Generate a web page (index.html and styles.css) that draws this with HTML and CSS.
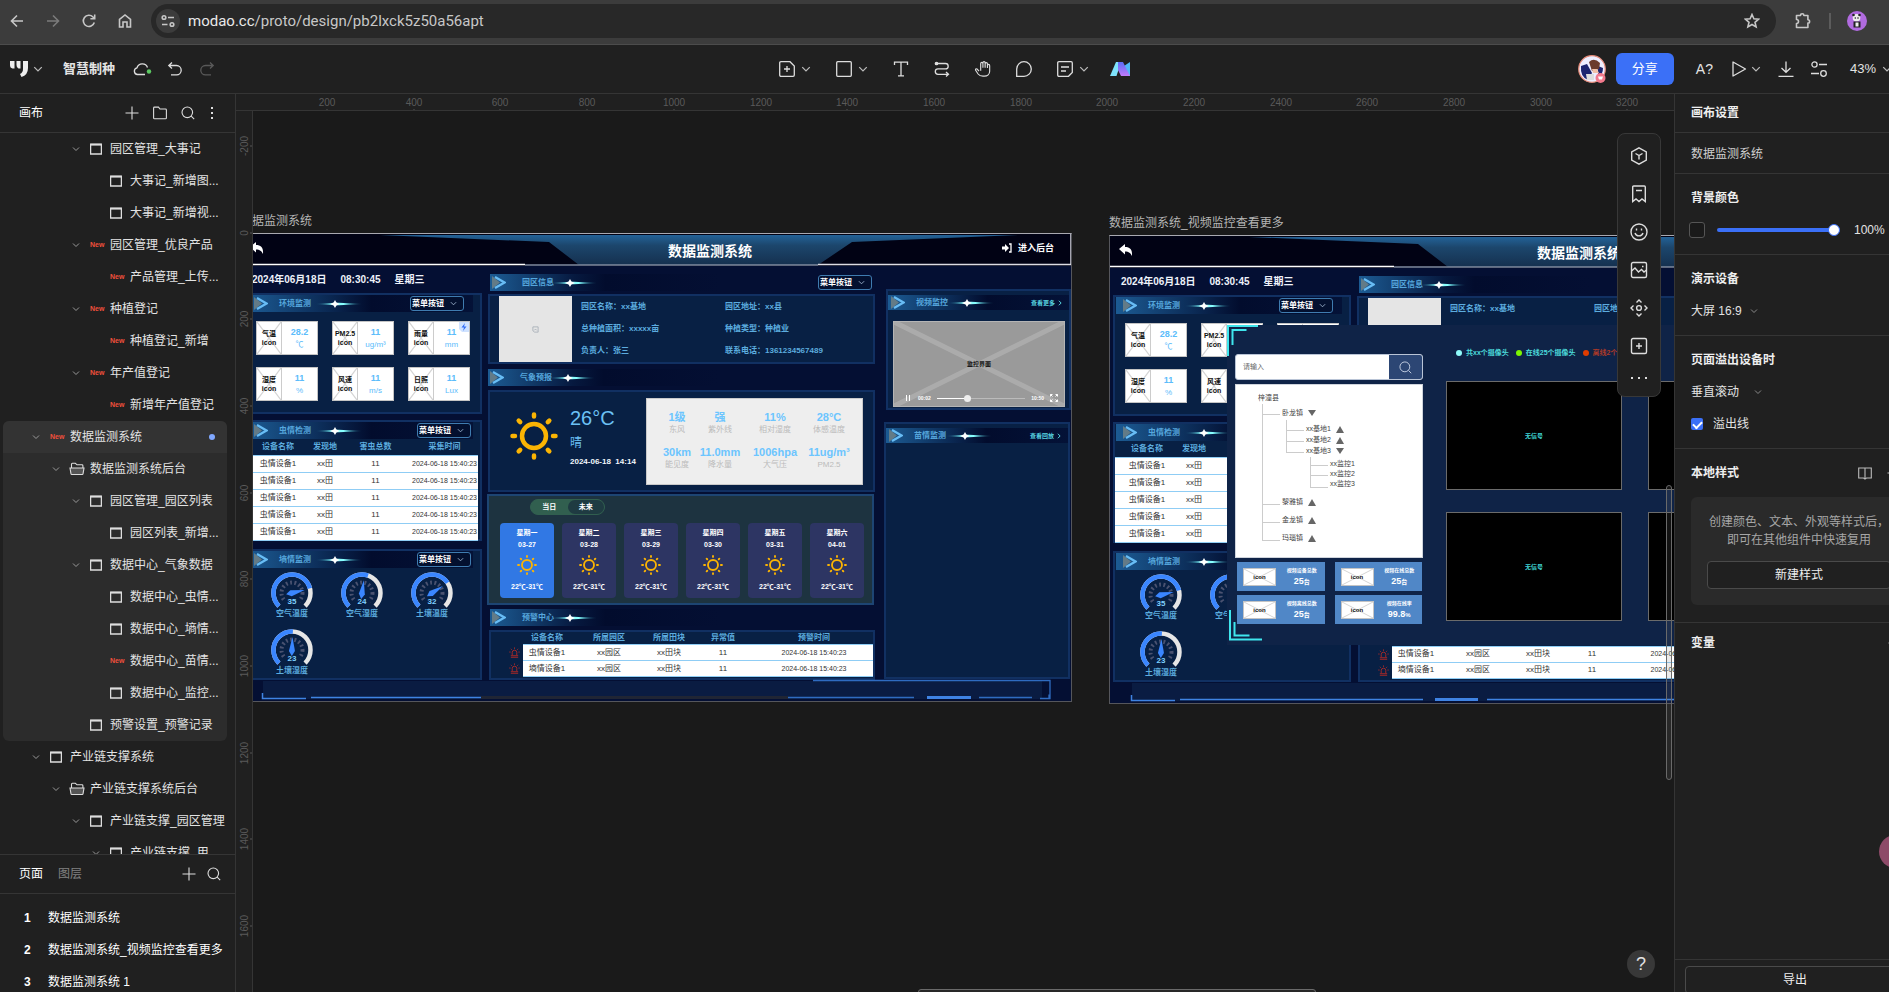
FILE: index.html
```html
<!DOCTYPE html>
<html lang="zh-CN">
<head>
<meta charset="utf-8">
<title>智慧制种</title>
<link rel="stylesheet" href="styles.css">
</head>
<body>
<svg class="sprite" aria-hidden="true">
  <defs>
    <linearGradient id="g-title" x1="0" y1="0" x2="0" y2="1"><stop offset="0" stop-color="#236297"/><stop offset=".35" stop-color="#1c466c"/><stop offset="1" stop-color="#15304f"/></linearGradient>
    <linearGradient id="g-spark" x1="0" y1="0" x2="1" y2="0"><stop offset="0" stop-color="#3fc4d8" stop-opacity=".1"/><stop offset=".4" stop-color="#8ff"/><stop offset=".6" stop-color="#8ff"/><stop offset="1" stop-color="#3fc4d8" stop-opacity=".1"/></linearGradient>
    <linearGradient id="g-ai" x1="0" y1="0" x2="0" y2="1"><stop offset="0" stop-color="#5b6cf5"/><stop offset="1" stop-color="#c07bfa"/></linearGradient>
    <symbol id="i-chev" viewBox="0 0 8 8"><path d="M1 2.5 4 5.5 7 2.5"/></symbol>
    <symbol id="i-right" viewBox="0 0 8 8"><path d="M2.500 1 5.500 4 2.500 7"/></symbol>
    <symbol id="i-frame" viewBox="0 0 12 12"><path d="M.6 1.200h10.800v9.800H.6z" /><path d="M.6 1.700h10.800" stroke-width="1.800"/></symbol>
    <symbol id="i-open" viewBox="0 0 16 14"><path d="M2.500 6V2.200c0-.6.3-.9.9-.9h3l1.600 1.500h5c.6 0 .9.300.9.900V6"/><path d="M1 6h14l-1 5.800c-.1.500-.4.700-.8.700H2.800c-.4 0-.7-.2-.8-.7z" fill="#555"/></symbol>
    <symbol id="i-plus" viewBox="0 0 14 14"><path d="M7 .5v13M.5 7h13"/></symbol>
    <symbol id="i-search" viewBox="0 0 14 14"><circle cx="6.300" cy="6.300" r="5.300"/><path d="m10.200 10.200 3 3"/></symbol>
    <symbol id="i-arrowhead" viewBox="0 0 14 13"><path d="M0 0v13l8-6.500z" fill="#637b87"/><path d="M3 1l9.500 5.500L3 12" fill="none" stroke="#68bdf5" stroke-width="2.200"/></symbol>
    <symbol id="i-spark" viewBox="0 0 46 8"><path d="M0 4 19 2.800h4l23 1.200-23 1.200h-4z" fill="url(#g-spark)"/><path d="M19 0l1.400 2.600L24 4l-3.600 1.400L19 8l-1.400-2.600L14 4l3.600-1.400z" fill="#fff"/></symbol>
    <symbol id="i-sun" viewBox="0 0 48 48"><circle cx="24" cy="24" r="12" fill="none" stroke="#fbb403" stroke-width="4.500"/><path d="M24 2.500v2M24 43.500v2M2.500 24h2.500M43 24h2.500M8.700 8.700l1.500 1.500M37.800 37.800l1.500 1.500M39.300 8.700l-1.500 1.500M10.200 37.800l-1.500 1.500" fill="none" stroke="#fbb403" stroke-width="4.500" stroke-linecap="round"/></symbol>
    <symbol id="i-cross" viewBox="0 0 25 32" preserveAspectRatio="none"><path d="M0 0 25 32M25 0 0 32" stroke="#d5d5d5" fill="none"/></symbol>
    <symbol id="i-back" viewBox="0 0 14 12"><path d="M6 0v3c5 0 7.500 2.500 7 9-1.500-3-3-4.500-7-4.500v3L0 5z" fill="#fff"/></symbol>
    <symbol id="i-alarm" viewBox="0 0 12 12"><path d="M3.500 9V6a2.500 2.500 0 0 1 5 0v3M2 9.500h8M2 11.200h8M6 .5v1.500M2 2l1 1M10 2 9 3M.3 5.500h1.400M10.300 5.500h1.400" fill="none" stroke="#b02a26" stroke-width="1"/></symbol>
    <symbol id="i-dial" viewBox="0 0 42 36"><circle cx="21" cy="21" r="10.500" fill="none" stroke="#4a5270" stroke-width="4" stroke-dasharray="1.800 2.500"/><path d="M13 27h16v8H13z" fill="#082044"/><path d="M7.900 34.100A18.500 18.500 0 1 1 34.100 34.100" fill="none" stroke="#e6e6e6" stroke-width="4.500"/></symbol>
    <symbol id="i-title" viewBox="0 0 832 33"><path d="M0 0h832v33H0z" fill="#010214"/><path d="M140 2h638L612 9l-34 23H339L309 9z" fill="url(#g-title)"/><path d="M0 31.500h285" stroke="#fff" stroke-width="1.500"/><path d="M285 32h293" stroke="#7f8ba0"/><path d="M578 31.500h253V0" fill="none" stroke="#dcdce4" stroke-width="1.500"/></symbol>
    <symbol id="i-foot" viewBox="0 0 832 22"><path d="M23 2h779v18H23z" fill="#0a1c42"/><path d="M22.500 14v5.500H66M71 18.500h170" fill="none" stroke="#3f83e3" stroke-width="1.500"/></symbol>
  </defs>
</svg>

<header class="browser">
  <nav class="nav" aria-label="浏览器导航">
    <button aria-label="后退"><svg viewBox="0 0 16 16"><path d="M14 8H3M8 2.500 2.500 8 8 13.500"/></svg></button>
    <button class="dim" aria-label="前进"><svg viewBox="0 0 16 16"><path d="M2 8h11M8 2.500 13.500 8 8 13.500"/></svg></button>
    <button aria-label="刷新"><svg viewBox="0 0 16 16"><path d="M13.300 9.500A5.600 5.600 0 1 1 12 4l1.500 1.500M13.700 1.500v4.300H9.400"/></svg></button>
    <button aria-label="主页"><svg viewBox="0 0 16 16"><path d="M2.500 14V6.500L8 2l5.500 4.500V14H10V9H6v5z"/></svg></button>
  </nav>
  <div class="address">
    <span class="site"><svg viewBox="0 0 16 16"><circle cx="4" cy="4.500" r="1.800"/><path d="M8 4.500h6M2 11.500h5.500"/><circle cx="12" cy="11.500" r="1.800"/></svg></span>
    <span class="url"><b>modao.cc</b>/proto/design/pb2lxck5z50a56apt</span>
    <button class="star" aria-label="收藏"><svg viewBox="0 0 16 16"><path d="m8 1.500 1.900 4.300 4.700.4-3.600 3.100 1.100 4.600L8 11.500l-4.100 2.400L5 9.300 1.400 6.200l4.700-.4z"/></svg></button>
  </div>
  <button class="ext" aria-label="扩展程序"><svg viewBox="0 0 18 18"><path d="M2.500 3.500h4a1.700 1.700 0 0 1 3.400 0h4v4.200a1.700 1.700 0 0 1 0 3.400v4.400H2.500v-4a2 2 0 0 0 0-4z" stroke-linejoin="round"/></svg></button>
  <i class="bar"></i>
  <button class="me" aria-label="账号"><svg viewBox="0 0 20 20"><circle cx="10" cy="10" r="10" fill="#b16be0"/><circle cx="9.500" cy="6.800" r="3.800" fill="#eee"/><circle cx="6.500" cy="4" r="1.300" fill="#222"/><circle cx="12.500" cy="4" r="1.300" fill="#222"/><path d="M6.500 10.500h7v6h-7z" fill="#222"/><path d="M8.500 11.500h3v4h-3z" fill="#eee"/><circle cx="8.300" cy="7" r=".8" fill="#222"/><circle cx="11" cy="7" r=".8" fill="#222"/></svg></button>
</header>

<div class="app">
  <header class="toolbar">
    <div class="tools left">
      <button class="brand" aria-label="墨刀"><svg viewBox="0 0 18 18"><path d="M0 1h4.500v7.500H2.500Q0 8 0 5zM6.500 1h4v7.500h-2Q6.500 8 6.500 5zM13 1h5v7q0 7-6.500 9l-1.500-3q3-1.500 3-5z" fill="#eee"/></svg></button>
      <svg class="ic chev"><use href="#i-chev"/></svg>
      <h1>智慧制种</h1>
      <button class="cloud" aria-label="已同步"><svg viewBox="0 0 20 16"><path d="M12 13.500H4.500a3.400 3.400 0 0 1-.5-6.700A5.500 5.500 0 0 1 14.500 6.500"/><circle cx="16" cy="10.500" r="2.200" fill="#5cc862" stroke="none"/></svg></button>
      <button aria-label="撤销"><svg viewBox="0 0 16 16"><path d="M5 1.500 1.800 4.500 5 7.500M2 4.500h7.500a4.700 4.700 0 0 1 0 9.400H4"/></svg></button>
      <button class="off" aria-label="重做"><svg viewBox="0 0 16 16"><path d="M11 1.500l3.200 3-3.200 3M14 4.500H6.500a4.700 4.700 0 0 0 0 9.400H12"/></svg></button>
    </div>
    <div class="tools mid">
      <button aria-label="添加页面"><svg viewBox="0 0 16 16"><path d="M2 .7h9L15.300 5v9c0 .8-.5 1.300-1.300 1.300H2c-.8 0-1.300-.5-1.300-1.300V2C.7 1.200 1.200.7 2 .7zM8 5v6M5 8h6"/></svg></button>
      <svg class="ic chev"><use href="#i-chev"/></svg>
      <button class="wide" aria-label="形状"><svg viewBox="0 0 16 16"><rect x=".7" y=".7" width="14.600" height="14.600" rx="1"/></svg></button>
      <svg class="ic chev"><use href="#i-chev"/></svg>
      <button class="wide" aria-label="文本"><svg viewBox="0 0 16 16"><path d="M1.500 4V1.200h13V4M8 1.200v13.600M5 14.800h6"/></svg></button>
      <button class="wide" aria-label="连线"><svg viewBox="0 0 16 16"><circle cx="2.500" cy="2.500" r="1.200" fill="#ddd"/><path d="M3 2.500h8.500a2.700 2.700 0 0 1 0 5.400H4a2.700 2.700 0 0 0 0 5.400h10M12 11l2.500 2.300L12 15.500"/></svg></button>
      <button class="wide" aria-label="拖动"><svg viewBox="0 0 18 18"><path d="M4.500 11.500 2.700 9.300C1.500 8-.2 9.300.9 10.700l2.600 3.900C4.700 16.300 6.500 17 9 17h1.500c3.500 0 6-2.300 6-5.500V5.300c0-1.900-2.500-1.900-2.500 0V8V3.200c0-1.900-2.600-1.900-2.600 0V7.500 2c0-1.800-2.500-1.800-2.500 0v5.500V3c0-1.900-2.500-1.900-2.500 0v8"/></svg></button>
      <button class="wide" aria-label="评论"><svg viewBox="0 0 16 16"><path d="M.7 15.300V8A7.300 7.300 0 1 1 8 15.300z"/></svg></button>
      <button class="wide" aria-label="便签"><svg viewBox="0 0 16 16"><path d="M2 .7h12c.8 0 1.300.5 1.300 1.300v9.500l-3.800 3.800H2c-.8 0-1.300-.5-1.300-1.300V2C.7 1.200 1.200.7 2 .7zM4 6h8M4 10h5"/></svg></button>
      <svg class="ic chev"><use href="#i-chev"/></svg>
      <button class="ai" aria-label="AI"><svg viewBox="0 0 22 16"><path d="M6 1h5l-4.500 14H0z" fill="#7fe3fb"/><path d="M14 5l6-4v14h-6z" fill="#4fb8f5"/><path d="M8 1h5l7 14h-9L8 9z" fill="url(#g-ai)"/></svg></button>
    </div>
    <div class="tools right">
      <button class="face" aria-label="用户"><svg viewBox="0 0 28 28"><circle cx="14" cy="14" r="13.300" fill="#eef" stroke="#e58a78" stroke-width="1.200"/><path d="M3 11l6-2 5 9-4 7q-8-3-7-14zM20 11l5 2q0 7-5 9z" fill="#1d2570"/><path d="M11 7q5-5 11 1l-1 6-7 2z" fill="#6b3b2c"/><path d="M14 14h5l2 4h-6z" fill="#f2c1a8"/><path d="M8 19h8v6H9z" fill="#ddd"/><circle cx="22.500" cy="23" r="5" fill="#f2798c"/><path d="M20 21.500h5l-1 3h-3z" fill="#fff"/></svg></button>
      <button class="share">分享</button>
      <button class="txt">A?</button>
      <button class="play" aria-label="运行"><svg viewBox="0 0 16 16"><path d="M2 1v14L14.500 8z" stroke-linejoin="round"/></svg></button>
      <svg class="ic chev"><use href="#i-chev"/></svg>
      <button class="dl" aria-label="下载"><svg viewBox="0 0 16 16"><path d="M8 .5V11M3.500 7 8 11.300 12.500 7M.5 15.300h15"/></svg></button>
      <button class="set" aria-label="设置"><svg viewBox="0 0 16 16"><circle cx="3.500" cy="3.500" r="2.600"/><path d="M8 3.500h8M0 12.500h8"/><circle cx="12.500" cy="12.500" r="2.800"/></svg></button>
      <button class="pct">43%</button>
      <svg class="ic chev"><use href="#i-chev"/></svg>
    </div>
  </header>

  <main class="work">
    <aside class="side">
      <div class="side-head">
        <h2>画布</h2>
        <button aria-label="添加"><svg><use href="#i-plus"/></svg></button>
        <button aria-label="文件夹"><svg viewBox="0 0 14 14"><path d="M.6 2c0-.6.300-.9.900-.9h4L7 3h5.500c.6 0 .9.300.9.900v8c0 .6-.3.900-.9.900h-11c-.6 0-.9-.3-.9-.9z"/></svg></button>
        <button aria-label="搜索"><svg><use href="#i-search"/></svg></button>
        <button class="more" aria-label="更多"><svg viewBox="0 0 14 14"><path d="M7 1v2M7 6v2M7 11v2" stroke-width="2"/></svg></button>
      </div>
      <ul class="tree">
        <li class="l3"><svg class="tw"><use href="#i-chev"/></svg><svg class="fr"><use href="#i-frame"/></svg><span>园区管理_大事记</span></li>
        <li class="l4"><svg class="fr"><use href="#i-frame"/></svg><span>大事记_新增图...</span></li>
        <li class="l4"><svg class="fr"><use href="#i-frame"/></svg><span>大事记_新增视...</span></li>
        <li class="l3"><svg class="tw"><use href="#i-chev"/></svg><em>New</em><span>园区管理_优良产品</span></li>
        <li class="l4"><em>New</em><span>产品管理_上传...</span></li>
        <li class="l3"><svg class="tw"><use href="#i-chev"/></svg><em>New</em><span>种植登记</span></li>
        <li class="l4"><em>New</em><span>种植登记_新增</span></li>
        <li class="l3"><svg class="tw"><use href="#i-chev"/></svg><em>New</em><span>年产值登记</span></li>
        <li class="l4"><em>New</em><span>新增年产值登记</span></li>
        <li class="group">
          <ul>
            <li class="l1 sel"><svg class="tw"><use href="#i-chev"/></svg><em>New</em><span>数据监测系统</span><i class="dot"></i></li>
            <li class="l2"><svg class="tw"><use href="#i-chev"/></svg><svg class="fo"><use href="#i-open"/></svg><span>数据监测系统后台</span></li>
            <li class="l3"><svg class="tw"><use href="#i-chev"/></svg><svg class="fr"><use href="#i-frame"/></svg><span>园区管理_园区列表</span></li>
            <li class="l4"><svg class="fr"><use href="#i-frame"/></svg><span>园区列表_新增...</span></li>
            <li class="l3"><svg class="tw"><use href="#i-chev"/></svg><svg class="fr"><use href="#i-frame"/></svg><span>数据中心_气象数据</span></li>
            <li class="l4"><svg class="fr"><use href="#i-frame"/></svg><span>数据中心_虫情...</span></li>
            <li class="l4"><svg class="fr"><use href="#i-frame"/></svg><span>数据中心_墒情...</span></li>
            <li class="l4"><em>New</em><span>数据中心_苗情...</span></li>
            <li class="l4"><svg class="fr"><use href="#i-frame"/></svg><span>数据中心_监控...</span></li>
            <li class="l3"><svg class="tw none"></svg><svg class="fr"><use href="#i-frame"/></svg><span>预警设置_预警记录</span></li>
          </ul>
        </li>
        <li class="l1"><svg class="tw"><use href="#i-chev"/></svg><svg class="fr"><use href="#i-frame"/></svg><span>产业链支撑系统</span></li>
        <li class="l2"><svg class="tw"><use href="#i-chev"/></svg><svg class="fo"><use href="#i-open"/></svg><span>产业链支撑系统后台</span></li>
        <li class="l3"><svg class="tw"><use href="#i-chev"/></svg><svg class="fr"><use href="#i-frame"/></svg><span>产业链支撑_园区管理</span></li>
        <li class="l4"><svg class="tw deep"><use href="#i-chev"/></svg><svg class="fr"><use href="#i-frame"/></svg><span>产业链支撑_用</span></li>
      </ul>
      <section class="pages">
        <div class="side-head">
          <button class="tab on">页面</button><button class="tab">图层</button>
          <button class="push" aria-label="添加页面"><svg><use href="#i-plus"/></svg></button>
          <button aria-label="搜索页面"><svg><use href="#i-search"/></svg></button>
        </div>
        <ol>
          <li><b>1</b>数据监测系统</li>
          <li><b>2</b>数据监测系统_视频监控查看更多</li>
          <li><b>3</b>数据监测系统 1</li>
        </ol>
      </section>
    </aside>

    <section class="stage">
      <svg class="ruler-x">
        <g><text x="91" y="12">200</text><text x="178" y="12">400</text><text x="264" y="12">600</text><text x="351" y="12">800</text><text x="438" y="12">1000</text><text x="525" y="12">1200</text><text x="611" y="12">1400</text><text x="698" y="12">1600</text><text x="785" y="12">1800</text><text x="871" y="12">2000</text><text x="958" y="12">2200</text><text x="1045" y="12">2400</text><text x="1131" y="12">2600</text><text x="1218" y="12">2800</text><text x="1305" y="12">3000</text><text x="1391" y="12">3200</text></g>
        <path d="M91 15v2M178 15v2M264 15v2M351 15v2M438 15v2M525 15v2M611 15v2M698 15v2M785 15v2M871 15v2M958 15v2M1045 15v2M1131 15v2M1218 15v2M1305 15v2M1391 15v2"/>
      </svg>
      <svg class="ruler-y">
        <g><text transform="translate(12 35) rotate(-90)">-200</text><text transform="translate(12 122) rotate(-90)">0</text><text transform="translate(12 208) rotate(-90)">200</text><text transform="translate(12 295) rotate(-90)">400</text><text transform="translate(12 382) rotate(-90)">600</text><text transform="translate(12 468) rotate(-90)">800</text><text transform="translate(12 555) rotate(-90)">1000</text><text transform="translate(12 642) rotate(-90)">1200</text><text transform="translate(12 728) rotate(-90)">1400</text><text transform="translate(12 815) rotate(-90)">1600</text></g>
        <path d="M14 35h2M14 122h2M14 208h2M14 295h2M14 382h2M14 468h2M14 555h2M14 642h2M14 728h2M14 815h2"/>
      </svg>

      <div class="canvas">
        <h3 class="name name-a">数据监测系统</h3>
        <article class="board board-a">
          <svg class="title-bg"><use href="#i-title"/></svg>
          <svg class="back"><use href="#i-back"/></svg>
          <h2 class="title">数据监测系统</h2>
          <a class="enter" href="#"><svg viewBox="0 0 10 10"><path d="M0 3.500h3V1l4 4-4 4V6.500H0z" fill="#fff"/><path d="M7 1h2v8H7" fill="none" stroke="#fff" stroke-width="1.300"/></svg>进入后台</a>
          <p class="clock"><span>2024年06月18日</span><span>08:30:45</span><span>星期三</span></p>

          <section class="panel p-env">
            <div class="head"><svg class="ah"><use href="#i-arrowhead"/></svg><h4>环境监测</h4><svg class="sp"><use href="#i-spark"/></svg><span class="dd"><select aria-label="环境监测菜单"><option>菜单按钮</option></select><svg><use href="#i-chev"/></svg></span></div>
            <div class="cards">
              <div class="card"><div class="ico"><svg><use href="#i-cross"/></svg><span>气温</span><span>icon</span></div><p><b>28.2</b><i>℃</i></p></div>
              <div class="card"><div class="ico"><svg><use href="#i-cross"/></svg><span>PM2.5</span><span>icon</span></div><p><b>11</b><i>ug/m³</i></p></div>
              <div class="card"><div class="ico"><svg><use href="#i-cross"/></svg><span>雨量</span><span>icon</span></div><p><b>11</b><i>mm</i></p><svg class="bolt" viewBox="0 0 10 10"><path d="M0 0h10v10H3L0 7z" fill="#cfe2ff"/><path d="M6 1 2.500 5.500H5L4 9l3.500-4.500H5z" fill="#2f6bf5"/></svg></div>
              <div class="card"><div class="ico"><svg><use href="#i-cross"/></svg><span>湿度</span><span>icon</span></div><p><b>11</b><i>%</i></p></div>
              <div class="card"><div class="ico"><svg><use href="#i-cross"/></svg><span>风速</span><span>icon</span></div><p><b>11</b><i>m/s</i></p></div>
              <div class="card"><div class="ico"><svg><use href="#i-cross"/></svg><span>日照</span><span>icon</span></div><p><b>11</b><i>Lux</i></p></div>
            </div>
          </section>

          <section class="panel p-bug">
            <div class="head"><svg class="ah"><use href="#i-arrowhead"/></svg><h4>虫情检测</h4><svg class="sp"><use href="#i-spark"/></svg><span class="dd"><select aria-label="虫情检测菜单"><option>菜单按钮</option></select><svg><use href="#i-chev"/></svg></span></div>
            <table class="bugs">
              <thead><tr><th>设备名称</th><th>发现地</th><th>害虫总数</th><th>采集时间</th></tr></thead>
              <tbody>
                <tr><td>虫情设备1</td><td>xx田</td><td>11</td><td>2024-06-18 15:40:23</td></tr>
                <tr><td>虫情设备1</td><td>xx田</td><td>11</td><td>2024-06-18 15:40:23</td></tr>
                <tr><td>虫情设备1</td><td>xx田</td><td>11</td><td>2024-06-18 15:40:23</td></tr>
                <tr><td>虫情设备1</td><td>xx田</td><td>11</td><td>2024-06-18 15:40:23</td></tr>
                <tr><td>虫情设备1</td><td>xx田</td><td>11</td><td>2024-06-18 15:40:23</td></tr>
              </tbody>
            </table>
          </section>

          <section class="panel p-soil">
            <div class="head"><svg class="ah"><use href="#i-arrowhead"/></svg><h4>墒情监测</h4><svg class="sp"><use href="#i-spark"/></svg><span class="dd"><select aria-label="墒情监测菜单"><option>菜单按钮</option></select><svg><use href="#i-chev"/></svg></span></div>
            <div class="gauges">
              <figure><svg viewBox="0 0 42 36"><use href="#i-dial"/><path class="arc" pathLength="100" stroke-dasharray="78 100" d="M7.900 34.100A18.500 18.500 0 1 1 34.100 34.100"/><path class="needle" transform="rotate(77 21 21)" d="M21 8l3 14-3 5-3-5z"/><text x="21" y="32">35</text></svg><figcaption>空气温度</figcaption></figure>
              <figure><svg viewBox="0 0 42 36"><use href="#i-dial"/><path class="arc" pathLength="100" stroke-dasharray="57 100" d="M7.900 34.100A18.500 18.500 0 1 1 34.100 34.100"/><path class="needle" transform="rotate(8 21 21)" d="M21 8l3 14-3 5-3-5z"/><text x="21" y="32">24</text></svg><figcaption>空气湿度</figcaption></figure>
              <figure><svg viewBox="0 0 42 36"><use href="#i-dial"/><path class="arc" pathLength="100" stroke-dasharray="71 100" d="M7.900 34.100A18.500 18.500 0 1 1 34.100 34.100"/><path class="needle" transform="rotate(57 21 21)" d="M21 8l3 14-3 5-3-5z"/><text x="21" y="32">32</text></svg><figcaption>土壤温度</figcaption></figure>
              <figure><svg viewBox="0 0 42 36"><use href="#i-dial"/><path class="arc" pathLength="100" stroke-dasharray="51 100" d="M7.900 34.100A18.500 18.500 0 1 1 34.100 34.100"/><path class="needle" transform="rotate(2 21 21)" d="M21 8l3 14-3 5-3-5z"/><text x="21" y="32">23</text></svg><figcaption>土壤湿度</figcaption></figure>
            </div>
          </section>

          <div class="head h-park"><svg class="ah"><use href="#i-arrowhead"/></svg><h4>园区信息</h4><svg class="sp"><use href="#i-spark"/></svg><span class="dd"><select aria-label="园区信息菜单"><option>菜单按钮</option></select><svg><use href="#i-chev"/></svg></span></div>
          <section class="panel p-park">
            <div class="photo"><svg viewBox="0 0 8 8"><path d="M1 1h6v6H3L1 5.500zM2.500 5l1.500-1.500L5.500 5" fill="none" stroke="#9aa4ad" stroke-width=".8"/></svg></div>
            <ul class="facts"><li>园区名称：xx基地</li><li>园区地址：xx县</li><li>总种植面积：xxxxx亩</li><li>种植类型：种植业</li><li>负责人：张三</li><li>联系电话：1361234567489</li></ul>
          </section>

          <div class="head h-weather"><svg class="ah"><use href="#i-arrowhead"/></svg><h4>气象预报</h4><svg class="sp"><use href="#i-spark"/></svg></div>
          <section class="panel p-weather">
            <svg class="sun"><use href="#i-sun"/></svg>
            <div class="now"><strong>26°C</strong><span>晴</span><time>2024-06-18&nbsp; 14:14</time></div>
            <dl class="stats">
              <div><dt>1级</dt><dd>东风</dd></div><div><dt>强</dt><dd>紫外线</dd></div><div><dt>11%</dt><dd>相对湿度</dd></div><div><dt>28°C</dt><dd>体感温度</dd></div>
              <div><dt>30km</dt><dd>能见度</dd></div><div><dt>11.0mm</dt><dd>降水量</dd></div><div><dt>1006hpa</dt><dd>大气压</dd></div><div><dt>11ug/m³</dt><dd>PM2.5</dd></div>
            </dl>
          </section>

          <section class="panel p-forecast">
            <div class="switch"><button>当日</button><button class="on">未来</button></div>
            <ul class="days">
              <li class="on"><span>星期一</span><span>03-27</span><svg><use href="#i-sun"/></svg><span>22℃-31℃</span></li>
              <li><span>星期二</span><span>03-28</span><svg><use href="#i-sun"/></svg><span>22℃-31℃</span></li>
              <li><span>星期三</span><span>03-29</span><svg><use href="#i-sun"/></svg><span>22℃-31℃</span></li>
              <li><span>星期四</span><span>03-30</span><svg><use href="#i-sun"/></svg><span>22℃-31℃</span></li>
              <li><span>星期五</span><span>03-31</span><svg><use href="#i-sun"/></svg><span>22℃-31℃</span></li>
              <li><span>星期六</span><span>04-01</span><svg><use href="#i-sun"/></svg><span>22℃-31℃</span></li>
            </ul>
          </section>

          <div class="head h-warn"><svg class="ah"><use href="#i-arrowhead"/></svg><h4>预警中心</h4><svg class="sp"><use href="#i-spark"/></svg></div>
          <section class="panel p-warn">
            <table class="warns">
              <thead><tr><td></td><th>设备名称</th><th>所属园区</th><th>所属田块</th><th>异常值</th><th>预警时间</th></tr></thead>
              <tbody>
                <tr><td class="al"><svg><use href="#i-alarm"/></svg></td><td>虫情设备1</td><td>xx园区</td><td>xx田块</td><td>11</td><td>2024-06-18 15:40:23</td></tr>
                <tr><td class="al"><svg><use href="#i-alarm"/></svg></td><td>墒情设备1</td><td>xx园区</td><td>xx田块</td><td>11</td><td>2024-06-18 15:40:23</td></tr>
              </tbody>
            </table>
          </section>

          <section class="panel p-video">
            <div class="head"><svg class="ah"><use href="#i-arrowhead"/></svg><h4>视频监控</h4><svg class="sp"><use href="#i-spark"/></svg><a href="#">查看更多<svg><use href="#i-right"/></svg></a></div>
            <div class="player">
              <svg class="x"><use href="#i-cross"/></svg>
              <span class="cap">监控界面</span>
              <div class="ctl"><svg viewBox="0 0 8 8"><path d="M2.500 1v6M5.500 1v6"/></svg><span>00:02</span><input type="range" value="33" aria-label="播放进度"><span>10:50</span><svg viewBox="0 0 8 8"><path d="M.5 2.500v-2h2M7.500 2.500v-2h-2M.5 5.500v2h2M7.500 5.500v2h-2M.5.5l2 2M7.500.5l-2 2M.5 7.500l2-2M7.500 7.500l-2-2"/></svg></div>
            </div>
          </section>
          <section class="panel p-seed">
            <div class="head"><svg class="ah"><use href="#i-arrowhead"/></svg><h4>苗情监测</h4><svg class="sp"><use href="#i-spark"/></svg><a href="#">查看回放<svg><use href="#i-right"/></svg></a></div>
          </section>
          <svg class="foot" viewBox="0 0 832 22"><use href="#i-foot"/><path d="M573 1.500h237v18h-8M800 19.500h9v-4" fill="none" stroke="#2f6bc0"/><path d="M241 18.500h307" stroke="#202534" stroke-width="3"/><path d="M548 18.500h126M739 18.500h53" stroke="#2f6bc0"/><path d="M687 18.500h44" stroke="#3f83e3" stroke-width="3"/></svg>
        </article>

        <h3 class="name name-b">数据监测系统_视频监控查看更多</h3>
        <article class="board board-b">
          <svg class="title-bg"><use href="#i-title"/></svg>
          <svg class="back"><use href="#i-back"/></svg>
          <h2 class="title">数据监测系统</h2>
          <p class="clock"><span>2024年06月18日</span><span>08:30:45</span><span>星期三</span></p>
          <section class="panel p-env">
            <div class="head"><svg class="ah"><use href="#i-arrowhead"/></svg><h4>环境监测</h4><svg class="sp"><use href="#i-spark"/></svg><span class="dd"><select aria-label="环境监测菜单"><option>菜单按钮</option></select><svg><use href="#i-chev"/></svg></span></div>
            <div class="cards">
              <div class="card"><div class="ico"><svg><use href="#i-cross"/></svg><span>气温</span><span>icon</span></div><p><b>28.2</b><i>℃</i></p></div>
              <div class="card"><div class="ico"><svg><use href="#i-cross"/></svg><span>PM2.5</span><span>icon</span></div><p></p></div>
              <div class="card"><div class="ico"></div><p></p></div>
              <div class="card"><div class="ico"><svg><use href="#i-cross"/></svg><span>湿度</span><span>icon</span></div><p><b>11</b><i>%</i></p></div>
              <div class="card"><div class="ico"><svg><use href="#i-cross"/></svg><span>风速</span><span>icon</span></div><p></p></div>
            </div>
          </section>
          <section class="panel p-bug">
            <div class="head"><svg class="ah"><use href="#i-arrowhead"/></svg><h4>虫情检测</h4><svg class="sp"><use href="#i-spark"/></svg></div>
            <table class="bugs">
              <thead><tr><th>设备名称</th><th>发现地</th><th></th><th></th></tr></thead>
              <tbody>
                <tr><td>虫情设备1</td><td>xx田</td><td></td><td></td></tr>
                <tr><td>虫情设备1</td><td>xx田</td><td></td><td></td></tr>
                <tr><td>虫情设备1</td><td>xx田</td><td></td><td></td></tr>
                <tr><td>虫情设备1</td><td>xx田</td><td></td><td></td></tr>
                <tr><td>虫情设备1</td><td>xx田</td><td></td><td></td></tr>
              </tbody>
            </table>
          </section>
          <section class="panel p-soil">
            <div class="head"><svg class="ah"><use href="#i-arrowhead"/></svg><h4>墒情监测</h4><svg class="sp"><use href="#i-spark"/></svg></div>
            <div class="gauges two">
              <figure><svg viewBox="0 0 42 36"><use href="#i-dial"/><path class="arc" pathLength="100" stroke-dasharray="78 100" d="M7.900 34.100A18.500 18.500 0 1 1 34.100 34.100"/><path class="needle" transform="rotate(77 21 21)" d="M21 8l3 14-3 5-3-5z"/><text x="21" y="32">35</text></svg><figcaption>空气温度</figcaption></figure>
              <figure><svg viewBox="0 0 42 36"><use href="#i-dial"/><path class="arc" pathLength="100" stroke-dasharray="57 100" d="M7.900 34.100A18.500 18.500 0 1 1 34.100 34.100"/></svg><figcaption>空气湿度</figcaption></figure>
              <figure><svg viewBox="0 0 42 36"><use href="#i-dial"/><path class="arc" pathLength="100" stroke-dasharray="51 100" d="M7.900 34.100A18.500 18.500 0 1 1 34.100 34.100"/><path class="needle" transform="rotate(2 21 21)" d="M21 8l3 14-3 5-3-5z"/><text x="21" y="32">23</text></svg><figcaption>土壤湿度</figcaption></figure>
            </div>
          </section>
          <div class="head h-park"><svg class="ah"><use href="#i-arrowhead"/></svg><h4>园区信息</h4><svg class="sp"><use href="#i-spark"/></svg></div>
          <section class="panel p-park"><div class="photo"></div><ul class="facts"><li>园区名称：xx基地</li><li>园区地址：xx县</li></ul></section>
          <section class="panel p-warn">
            <table class="warns">
              <thead><tr><td></td><th></th><th></th><th></th><th></th><th></th></tr></thead>
              <tbody>
                <tr><td class="al"><svg><use href="#i-alarm"/></svg></td><td>虫情设备1</td><td>xx园区</td><td>xx田块</td><td>11</td><td>2024-06-18 15:40:23</td></tr>
                <tr><td class="al"><svg><use href="#i-alarm"/></svg></td><td>墒情设备1</td><td>xx园区</td><td>xx田块</td><td>11</td><td>2024-06-18 15:40:23</td></tr>
              </tbody>
            </table>
          </section>
          <svg class="foot" viewBox="0 0 832 22"><use href="#i-foot"/><path d="M241 18.500h73M378 18.500h300" stroke="#3f83e3" stroke-width="1.500"/><path d="M326 18.500h43" stroke="#3f83e3" stroke-width="3"/></svg>

          <section class="dialog">
            <svg class="corners" viewBox="0 0 40 320"><path d="M1 31V1h30M5.500 20V5h14" /><path d="M3 285v29.500h32M7.500 297v13.500h15"/></svg>
            <div class="finder">
              <div class="find"><input type="text" placeholder="请输入" aria-label="搜索监控"><button aria-label="搜索"><svg><use href="#i-search"/></svg></button></div>
              <div class="places">
                <svg class="wires" viewBox="0 0 188 174"><path d="M26.500 19v136.500M26 29.500h18M26 119.500h18M26 137.500h18M26 155.500h18M50.500 35v32.500M50 45.500h18M50 56.500h18M50 67.500h18M74.500 72v30.500M74 80.500h18M74 90.500h18M74 102.500h18"/></svg>
                <span>梓潼县</span>
                <ul>
                  <li><span class="dn">卧龙镇</span>
                    <ul>
                      <li><span class="up">xx基地1</span></li>
                      <li><span class="up">xx基地2</span></li>
                      <li><span class="dn">xx基地3</span>
                        <ul><li><span>xx监控1</span></li><li><span>xx监控2</span></li><li><span>xx监控3</span></li></ul>
                      </li>
                    </ul>
                  </li>
                  <li><span class="up">黎雅镇</span></li>
                  <li><span class="up">金龙镇</span></li>
                  <li><span class="up">玛瑙镇</span></li>
                </ul>
              </div>
              <div class="totals">
                <div><span class="pic"><svg><use href="#i-cross"/></svg><b>icon</b></span><p>视频设备总数<strong>25<small>台</small></strong></p></div>
                <div><span class="pic"><svg><use href="#i-cross"/></svg><b>icon</b></span><p>视频在线总数<strong>25<small>台</small></strong></p></div>
                <div><span class="pic"><svg><use href="#i-cross"/></svg><b>icon</b></span><p>视频离线总数<strong>25<small>台</small></strong></p></div>
                <div><span class="pic"><svg><use href="#i-cross"/></svg><b>icon</b></span><p>视频在线率<strong>99.8<small>%</small></strong></p></div>
              </div>
            </div>
            <div class="feeds">
              <ul class="legend"><li>共xx个摄像头</li><li class="ok">在线25个摄像头</li><li class="bad">离线2个摄像头</li></ul>
              <div class="grid"><div>无信号</div><div></div><div>无信号</div><div></div></div>
            </div>
          </section>
        </article>
      </div>

      <div class="dock">
        <button aria-label="组件"><svg viewBox="0 0 18 18"><path d="M9 .8 16.300 4.900v8.200L9 17.200 1.700 13.100V4.900zM5.500 6.500 9 8.500l3.500-2M9 8.500v4"/></svg></button>
        <button aria-label="模板"><svg viewBox="0 0 18 18"><path d="M2.700 2c0-.7.300-1 1-1h10.600c.7 0 1 .3 1 1v14.500L12 14l-3 2.500L6 14l-3.300 2.500zM6 5.500h6"/></svg></button>
        <button aria-label="图标"><svg viewBox="0 0 18 18"><circle cx="9" cy="9" r="8"/><path d="M5 10a4.200 4.200 0 0 0 8 0M6.500 5.500v2M11.500 5.500v2"/></svg></button>
        <button aria-label="图片"><svg viewBox="0 0 18 18"><rect x="1.500" y="1.500" width="15" height="15" rx="1.500"/><path d="M1.500 10 5 7l3.500 4 3-2.500L14 11l2.500-2M12 5.500h1.500"/></svg></button>
        <button aria-label="母版"><svg viewBox="0 0 18 18"><circle cx="9" cy="9" r="2.400"/><path d="M6.500 3.500 9 1l2.500 2.500M6.500 14.500 9 17l2.500-2.500M3.500 6.500 1 9l2.500 2.500M14.500 6.500 17 9l-2.500 2.500"/></svg></button>
        <button aria-label="添加"><svg viewBox="0 0 18 18"><rect x="1.500" y="1.500" width="15" height="15" rx="1.500"/><path d="M9 6v6M6 9h6"/></svg></button>
        <button class="last" aria-label="更多"><svg viewBox="0 0 18 18"><path d="M1 9h2M8 9h2M15 9h2" stroke-width="2"/></svg></button>
      </div>
      <i class="bar-v"></i><i class="bar-h"></i>
      <button class="help" aria-label="帮助">?</button>
    </section>

    <aside class="props">
      <h2 class="cap">画布设置</h2>
      <p class="page">数据监测系统</p>
      <section class="bg">
        <h3>背景颜色</h3>
        <div class="row"><button class="swatch" aria-label="背景颜色"></button><input type="range" value="100" aria-label="不透明度"><output>100%</output></div>
      </section>
      <section>
        <h3>演示设备</h3>
        <div class="pick"><select aria-label="演示设备"><option>大屏 16:9</option></select><svg><use href="#i-chev"/></svg></div>
      </section>
      <section class="over">
        <h3>页面溢出设备时</h3>
        <div class="pick"><select aria-label="页面溢出设备时"><option>垂直滚动</option></select><svg><use href="#i-chev"/></svg></div>
        <label class="tick"><input type="checkbox" checked>溢出线</label>
      </section>
      <section class="styles">
        <h3>本地样式<button aria-label="样式库"><svg viewBox="0 0 14 14"><path d="M7 2v11M7 2H.7v10H5.500L7 13l1.500-1h4.800V2z"/></svg></button><button class="add" aria-label="新建样式"><svg><use href="#i-plus"/></svg></button></h3>
        <div class="tip"><p>创建颜色、文本、外观等样式后，<br>即可在其他组件中快速复用</p><button>新建样式</button></div>
      </section>
      <section class="vars"><h3>变量<button class="add" aria-label="新建变量"><svg><use href="#i-plus"/></svg></button></h3></section>
      <div class="out"><button>导出</button></div>
      <i class="bubble"></i>
    </aside>
  </main>
</div>
</body>
</html>
```

FILE: styles.css
```css
* { box-sizing: border-box; margin: 0; padding: 0; }
html, body { height: 100%; overflow: hidden; }
body {
  display: flex;
  flex-direction: column;
  background: #1a1a1a;
  color: #e3e3e3;
  font: 12px/16px "Liberation Sans", "Noto Sans CJK SC", sans-serif;
}
ul, ol { list-style: none; }
button, input, select { font: inherit; color: inherit; background: none; border: 0; appearance: none; outline: 0; }
button { display: block; flex: none; }
svg { display: block; flex: none; fill: none; stroke: #ddd; stroke-width: 1.3; }
em, i { font-style: normal; }
a { color: inherit; text-decoration: none; }
.sprite { position: absolute; width: 0; height: 0; }

/* browser bar */
.browser { display: flex; align-items: center; flex: none; height: 45px; padding: 0 22px 2px 9px; background: #3c3c3c; border-bottom: 1px solid #4c4c4c; }
.nav { display: flex; gap: 20px; margin-right: 18px; }
.nav svg, .site svg, .star svg { width: 16px; height: 16px; stroke: #c7c7c7; stroke-width: 1.6; }
.nav .dim svg { stroke: #7b7b7b; }
.address { display: flex; align-items: center; flex: 1; height: 34px; padding: 0 16px 0 5px; border-radius: 17px; background: #282828; }
.site { display: flex; align-items: center; justify-content: center; width: 24px; height: 24px; margin-right: 8px; border-radius: 12px; background: #3c3c3c; }
.url { flex: 1; color: #c7c7c7; font: 15px/20px Roboto, "Noto Sans", sans-serif; }
.url b { color: #e8e8e8; font-weight: 400; }
.ext { margin: 0 17px 0 18px; }
.ext svg { width: 18px; height: 18px; stroke: #c7c7c7; stroke-width: 1.6; }
.browser .bar { width: 2px; height: 16px; margin-right: 16px; background: #5c5c5c; }
.me svg { width: 20px; height: 20px; stroke: none; }

/* The editor keeps a fixed overhang past the window's right and bottom edges. */
.app { display: flex; flex-direction: column; flex: none; width: calc(100% + 26px); height: calc(100vh - 39px); background: #202020; }
.toolbar { display: flex; align-items: center; flex: none; height: 49px; border-bottom: 1px solid #353535; }
.tools { display: flex; align-items: center; }
.tools svg { width: 16px; height: 16px; }
.tools .chev { width: 10px; height: 10px; stroke: #bbb; stroke-width: 1; }
.left, .right { flex: 1; }
.left { padding-left: 10px; }
.brand svg { width: 18px; height: 18px; stroke: none; }
.left .chev { margin: 0 20px 0 5px; }
.left h1 { font-size: 13px; margin-right: 18px; }
.left .cloud { margin-right: 14px; }
.left .cloud svg { width: 20px; }
.left .off { margin-left: 16px; opacity: .3; }
.mid { padding-left: 8px; }
.mid .chev { margin-left: 6px; }
.mid .wide { margin-left: 25px; }
.mid .ai { margin-left: 21px; }
.mid .ai svg { width: 22px; stroke: none; }
.right { justify-content: flex-end; padding-right: 23px; }
.face svg { width: 28px; height: 28px; stroke: none; }
.share { width: 58px; height: 32px; margin: 0 22px 0 10px; border-radius: 6px; background: #3b70f7; color: #fff; font-size: 13px; }
.txt { margin-right: 18px; font-size: 14px; }
.right .chev { margin-left: 4px; }
.dl { margin: 0 17px; }
.pct { margin-left: 23px; font-size: 13px; }
.right .pct + .chev { margin-left: 6px; }

.work { display: grid; grid-template-columns: 236px 1fr 241px; flex: 1; min-height: 0; }

/* left panel */
.side { display: flex; flex-direction: column; min-height: 0; border-right: 1px solid #353535; }
.side-head { display: flex; align-items: center; flex: none; gap: 14px; height: 39px; padding: 0 16px 0 19px; border-bottom: 1px solid #353535; }
.side-head svg { width: 14px; height: 14px; stroke-width: 1.100; }
.side-head h2 { flex: 1; font-size: 12px; font-weight: 400; color: #fff; }
.side-head .more { margin-left: -4px; }
.tree { flex: 1; min-height: 0; overflow: hidden; }
.tree li:not(.group) { display: flex; align-items: center; height: 32px; }
.tree span { white-space: nowrap; }
.tree .l1 { padding-left: 32px; }
.tree .l2 { padding-left: 52px; }
.tree .l3 { padding-left: 72px; }
.tree .l4 { padding-left: 110px; }
.tree .tw { width: 8px; height: 8px; margin-right: 10px; stroke: #999; stroke-width: 1; }
.tree .deep { margin: 0 10px 0 -18px; }
.tree .fr { width: 12px; height: 12px; margin-right: 8px; }
.tree .fo { width: 16px; height: 14px; margin: 0 5px 0 -1px; stroke-width: 1.100; }
.tree em { width: 14px; margin-right: 6px; color: #f0503c; font-size: 7px; font-weight: 700; line-height: 12px; }
.group ul { margin: 0 8px 0 3px; border-radius: 6px; background: #2c2c2c; }
.group .l1 { padding-left: 29px; }
.group .l2 { padding-left: 49px; }
.group .l3 { padding-left: 69px; }
.group .l4 { padding-left: 107px; }
.group .sel { border-radius: 6px 6px 0 0; background: #333; }
.dot { width: 6px; height: 6px; margin: 0 12px 0 auto; border-radius: 3px; background: #80a8ff; }
.pages { flex: none; height: 144px; overflow: hidden; border-top: 1px solid #353535; }
.tab { color: #808080; }
.tab.on { color: #fff; }
.tab + .tab { margin-left: 4px; }
.pages .side-head { gap: 11px; padding-right: 14px; }
.push { margin-left: auto; }
.pages ol { padding-top: 8px; color: #fff; }
.pages li { display: flex; align-items: center; height: 32px; white-space: nowrap; }
.pages b { width: 24px; margin-left: 24px; }

/* stage and rulers */
.stage { position: relative; display: grid; grid-template: 17px 1fr / 17px 1fr; min-width: 0; min-height: 0; overflow: hidden; background: #1a1a1a; }
.ruler-x, .ruler-y { width: 100%; height: 100%; background: #202020; stroke: #555; stroke-width: 1; font-size: 10px; }
.ruler-x { grid-column: 1 / 3; border-bottom: 1px solid #353535; }
.ruler-y { border-right: 1px solid #353535; overflow: hidden; }
.stage text { fill: #5a5a5a; stroke: none; text-anchor: middle; }
.canvas { position: relative; overflow: hidden; }
.name { position: absolute; font-size: 12px; font-weight: 400; color: #b5b5b5; white-space: nowrap; }
.name-a { left: -13px; top: 102px; }
.name-b { left: 856px; top: 104px; }

/* artboards: nodes on the free canvas */
.board { position: absolute; width: 832px; height: 469px; overflow: hidden; background: #040f33; color: #5cacdf; font-size: 8px; line-height: 12px; }
.board > *, .board::after { position: absolute; }
.board::after { content: ""; inset: 0; border: 1px solid #55565c; border-top-color: #a9a9b0; pointer-events: none; }
.board-a { left: -13px; top: 122px; }
.board-b { left: 856px; top: 124px; }
.title-bg { left: 0; top: 0; width: 832px; height: 33px; stroke: none; }
.back { left: 10px; top: 9px; width: 14px; height: 12px; stroke: none; }
.title { left: 428px; top: 8px; color: #fff; font-size: 14px; line-height: 20px; }
.enter { display: flex; align-items: center; gap: 6px; left: 762px; top: 9px; color: #fff; font-weight: 700; font-size: 9px; }
.enter svg { width: 10px; height: 10px; stroke: none; }
.clock { display: flex; gap: 14px; left: 12px; top: 40px; color: #eef2fa; font-size: 10px; font-weight: 700; line-height: 14px; white-space: nowrap; }
.panel { border: 2px solid #113062; background: #082044; }
.p-env { left: 4px; top: 60px; width: 238px; height: 121px; }
.p-bug { left: 4px; top: 187px; width: 238px; height: 121px; }
.p-soil { left: 4px; top: 316px; width: 238px; height: 131px; }
.p-park { left: 248px; top: 61px; width: 387px; height: 70px; }
.p-weather { left: 248px; top: 157px; width: 387px; height: 102px; }
.p-forecast { left: 247px; top: 261px; width: 387px; height: 111px; }
.p-warn { left: 249px; top: 397px; width: 386px; height: 50px; }
.p-video { left: 646px; top: 56px; width: 185px; height: 121px; }
.p-seed { left: 644px; top: 189px; width: 186px; height: 257px; }

.head { display: flex; align-items: center; width: 226px; height: 17px; margin-left: 1px; padding: 0 9px 0 7px; background: linear-gradient(90deg, #1c5b93, #0b2a55 35%, #020c2d 55%, #041237); }
.head h4 { margin: 0 5px 0 11px; font-size: 8px; font-weight: 700; line-height: 12px; color: #56a7dd; white-space: nowrap; }
.ah { width: 14px; height: 13px; stroke: none; }
.sp { width: 46px; height: 8px; stroke: none; }
.p-bug .head, .p-soil .head { padding-right: 2px; }
.h-park, .h-weather, .h-warn { width: 385px; margin: 0; padding: 0 3px 0 2px; background: linear-gradient(90deg, #1c5b93, #06193f 22%, #020c2d 30%, #040f33 60%); }
.h-park h4, .h-weather h4, .h-warn h4 { margin: 0 -3px 0 16px; }
.h-park { left: 250px; top: 41px; }
.h-weather { left: 248px; top: 136px; }
.h-warn { left: 250px; top: 376px; }
.dd { display: flex; align-items: center; width: 54px; height: 15px; margin-left: auto; padding: 0 6px 0 1px; border: 1px solid #3f7cb0; border-radius: 3px; background: #03102f; }
.dd select { flex: 1; min-width: 0; color: #fff; font-weight: 700; line-height: 12px; }
.dd svg { width: 7px; height: 7px; stroke: #9fb6d0; stroke-width: 1; }

.cards { display: grid; grid-template-columns: repeat(3, 62px); grid-auto-rows: 34px; gap: 12px 14px; margin: 9px 0 0 10px; }
.card { position: relative; display: grid; grid-template-columns: 25px 1fr; border: 1px solid #c4c4c4; background: #fff; }
.ico { position: relative; display: flex; flex-direction: column; align-items: center; justify-content: center; border-right: 1px solid #ccc; color: #111; font-size: 7px; font-weight: 700; line-height: 9px; }
.ico svg { position: absolute; width: 100%; height: 100%; }
.ico span { position: relative; white-space: nowrap; }
.card p { display: flex; flex-direction: column; align-items: center; justify-content: center; color: #5cbcfb; }
.card b { font-size: 9px; line-height: 14px; font-weight: 700; }
.bolt { position: absolute; right: 0; top: 0; width: 10px; height: 10px; stroke: none; }

table { border-collapse: collapse; table-layout: fixed; text-align: center; white-space: nowrap; }
th { font-weight: 700; overflow: visible; }
.bugs { width: 232px; }
.bugs thead tr { height: 16px; }
.bugs tbody tr { height: 17px; }
.bugs th:nth-child(1) { width: 64px; }
.bugs th:nth-child(2) { width: 30px; }
.bugs th:nth-child(3) { width: 71px; }
tbody td { background: #fff; color: #333; border-top: 1px solid #8fcdf5; border-bottom: 1px solid #8fcdf5; }
td:last-child { font-size: 7px; }

.gauges { display: grid; grid-template-columns: repeat(3, 70px); row-gap: 9px; margin: 4px 0 0 11px; }
.gauges.two { grid-template-columns: repeat(2, 70px); }
.gauges figure { display: flex; flex-direction: column; align-items: center; }
.gauges svg { width: 42px; height: 36px; stroke: none; }
.gauges .arc { stroke: #3a86ff; stroke-width: 4.5; }
.needle { fill: #3a86ff; }
.stage .gauges text { fill: #7fd0ff; font-size: 8px; font-weight: 700; }
.gauges figcaption { font-weight: 700; }

.p-park, .p-weather { display: flex; }
.photo { display: flex; align-items: center; justify-content: center; width: 73px; margin: 0 9px; background: #e5e5e5; }
.photo svg { width: 7px; height: 7px; }
.facts { display: grid; grid-template-columns: 144px auto; grid-auto-rows: 22px; line-height: 22px; font-weight: 700; white-space: nowrap; }
.sun { width: 48px; height: 48px; margin: 20px 12px 0 20px; stroke: none; }
.now { width: 64px; margin: 13px 12px 0 0; white-space: nowrap; }
.now > * { display: block; }
.now strong { color: #6cc0f5; font-size: 20px; line-height: 26px; font-weight: 400; }
.now span { color: #6cc0f5; font-size: 12px; line-height: 24px; }
.now time { color: #f2f6fb; line-height: 14px; font-weight: 700; }
.stats { display: grid; grid-template-columns: 50px 36px 74px 34px; align-content: start; row-gap: 9px; width: 217px; height: 87px; margin-top: 6px; padding: 11px 0 0 5px; border: 1px solid #c9c9c9; background: #eee; color: #bbb; white-space: nowrap; }
.stats div { display: flex; flex-direction: column; align-items: center; }
.stats dt { color: #6cc5ff; font-size: 11px; line-height: 14px; font-weight: 700; }

.p-forecast { border-color: #1d4573; background: #1d3340; color: #fff; font-size: 7px; font-weight: 700; }
.switch { display: flex; width: 75px; height: 16px; margin: 3px 0 0 41px; border: 1px solid #315f4f; border-radius: 8px; background: #315f4f; }
.switch button { flex: 1; border-radius: 8px; font-weight: 700; }
.switch .on { background: #1f3b42; }
.days { display: grid; grid-template-columns: repeat(6, 54px); gap: 8px; margin: 8px 0 0 11px; }
.days li { display: flex; flex-direction: column; align-items: center; height: 75px; padding-top: 4px; border-radius: 4px; background: #2d3563; }
.days .on { background: #3178e4; }
.days svg { width: 20px; height: 20px; margin: 4px 0 6px; stroke: none; }

.warns { width: 382px; }
.warns thead tr { height: 12px; }
.warns tbody tr { height: 16px; }
.warns thead td { width: 32px; }
.warns th:nth-child(2) { width: 48px; }
.warns th:nth-child(3) { width: 76px; }
.warns th:nth-child(4) { width: 44px; }
.warns th:nth-child(5) { width: 64px; }
.warns .al { background: none; border: 0; }
.al svg { width: 11px; height: 11px; margin-left: 18px; stroke: none; }

.p-video .head, .p-seed .head { width: auto; height: 15px; margin: 4px 0 0; padding: 0 6px 0 3px; }
.p-video h4, .p-seed h4 { margin-right: 0; }
.head a { display: flex; align-items: center; gap: 2px; margin-left: auto; color: #58d5e0; font-size: 6px; font-weight: 700; }
.head a svg { width: 6px; height: 6px; stroke: #58d5e0; }
.player { position: relative; display: flex; flex-direction: column; align-items: center; height: 86px; margin: 11px 4px 0 5px; border: 1px solid #b5b5b5; background: #9a9a9a; }
.player .x { position: absolute; width: 100%; height: 100%; opacity: .3; }
.cap { color: #111; }
.player .cap { position: relative; margin: 36px 0 22px; font-size: 6px; font-weight: 700; }
.ctl { position: relative; display: flex; align-items: center; gap: 6px; width: 100%; padding: 0 6px 0 10px; color: #fff; font-size: 5px; font-weight: 700; }
.ctl svg { width: 8px; height: 8px; stroke: #fff; stroke-width: 1; }
.ctl input { flex: 1; min-width: 0; height: 1px; background: linear-gradient(90deg, #fff 33%, #bbb 33%); }
.ctl input::-webkit-slider-thumb { appearance: none; width: 7px; height: 7px; border-radius: 4px; background: #eee; }
.foot { left: 0; top: 446px; width: 832px; height: 22px; stroke: none; }

/* video dialog */
.dialog { display: flex; left: 118px; top: 90px; width: 714px; height: 320px; background: #0f2347; }
.corners { position: absolute; left: 0; top: 0; width: 40px; height: 320px; stroke: #3fe6ee; stroke-width: 2; }
.finder { position: relative; width: 188px; margin: 29px 23px 0 8px; }
.find { display: flex; height: 26px; margin-bottom: 4px; border: 1px solid #b9c4d6; border-radius: 3px; background: #fff; overflow: hidden; }
.find input { flex: 1; min-width: 0; padding-left: 7px; font-size: 7px; color: #333; }
.find input::placeholder { color: #666; }
.find button { display: flex; align-items: center; justify-content: center; width: 33px; background: #2c4674; }
.find svg { width: 13px; height: 13px; stroke: #c9d4e6; stroke-width: 1; }
.places { position: relative; height: 174px; margin-bottom: 4px; padding: 8px 0 0 22px; border: 1px solid #cfd4dc; background: #fff; color: #444; font-size: 7px; line-height: 10px; }
.places span { display: flex; align-items: center; gap: 5px; }
.places ul { padding-left: 24px; }
.places > ul > li { padding-top: 5px; }
.places > ul > li + li { padding-top: 8px; }
.places ul ul { padding-top: 6px; }
.places ul ul li + li { padding-top: 1px; }
.places ul ul ul { padding-top: 3px; }
.places ul ul ul li + li { padding-top: 0; }
.up::after, .dn::after { content: ""; border: 4px solid transparent; }
.up::after { border-width: 0 4px 7px; border-bottom-color: #666; }
.dn::after { border-width: 6px 4px 0; border-top-color: #666; }
.wires { position: absolute; left: 0; top: 0; width: 188px; height: 174px; stroke: #ccc; stroke-width: 1; }
.totals { display: grid; grid-template-columns: 1fr 1fr; grid-auto-rows: 29px; gap: 4px 10px; padding: 0 1px 0 2px; color: #fff; font-size: 5px; font-weight: 700; }
.totals div { display: flex; align-items: center; gap: 3px; padding-left: 6px; background: #5087c7; }
.pic { position: relative; display: flex; align-items: center; justify-content: center; width: 33px; height: 18px; border: 1px solid #c4c4c4; background: #fff; color: #111; font-size: 6px; }
.pic svg { position: absolute; width: 100%; height: 100%; }
.pic b { position: relative; }
.totals p { flex: 1; text-align: center; line-height: 9px; white-space: nowrap; }
.totals strong { display: block; font-size: 9px; line-height: 12px; }
.totals small { font-size: 6px; }
.feeds { padding-top: 22px; }
.legend { display: flex; gap: 7px; margin-bottom: 22px; padding-left: 10px; font-size: 7px; font-weight: 700; color: #4cdbdb; white-space: nowrap; }
.legend li { display: flex; align-items: center; gap: 4px; }
.legend li::before { content: ""; width: 6px; height: 6px; border-radius: 3px; background: #8ffafa; }
.legend .ok::before { background: #7df500; }
.legend .bad { color: #b03a28; }
.legend .bad::before { background: #e03c00; }
.feeds .grid { display: grid; grid-template-columns: 176px 176px; grid-auto-rows: 109px; gap: 22px 26px; }
.grid div { display: flex; align-items: center; justify-content: center; border: 1px solid #6b6b6b; background: #000; color: #3fd6d6; font-size: 6px; font-weight: 700; }

/* overlays on the stage */
.dock { position: absolute; right: 13px; top: 39px; display: flex; flex-direction: column; align-items: center; gap: 20px; width: 44px; height: 264px; padding-top: 13px; border: 1px solid #383838; border-radius: 8px; background: #202020; }
.dock svg { width: 18px; height: 18px; stroke-width: 1.400; }
.dock .last { margin-top: -6px; }
.bar-v, .bar-h { position: absolute; border: 1px solid #6a6a6a; border-radius: 3px; background: rgba(120, 120, 120, .15); }
.bar-v { right: 2px; top: 391px; width: 6px; height: 295px; }
.bar-h { left: 682px; bottom: 3px; width: 398px; height: 6px; }
.help { position: absolute; right: 19px; bottom: 20px; width: 28px; height: 28px; border-radius: 14px; background: #383838; font-size: 18px; }

/* right panel */
.props { position: relative; display: flex; flex-direction: column; border-left: 1px solid #353535; }
.props h2, .props h3 { font-size: 12px; line-height: 16px; color: #eee; }
.props .cap { height: 39px; padding: 11px 16px; border-bottom: 1px solid #353535; }
.page { height: 41px; padding: 13px 16px 0; border-bottom: 1px solid #353535; color: #d0d0d0; }
.props section { height: 81px; padding: 16px 16px 0; border-bottom: 1px solid #353535; }
.row { display: flex; align-items: center; height: 16px; margin: 16px 0 0 -2px; }
.swatch { width: 16px; height: 16px; border: 1px solid #555; border-radius: 3px; background: #1a1a1a; }
.row input { width: 123px; height: 4px; margin: 0 14px 0 12px; border-radius: 2px; background: #3b70f7; }
.row input::-webkit-slider-thumb { appearance: none; width: 12px; height: 12px; border: 1px solid #3b70f7; border-radius: 6px; background: #fff; }
.pick { display: flex; align-items: center; gap: 8px; height: 16px; margin-top: 16px; }
.pick svg { width: 8px; height: 8px; stroke: #888; stroke-width: 1; }
.props .over { height: 113px; }
.over .pick { gap: 14px; }
.tick { display: flex; align-items: center; gap: 10px; height: 16px; margin-top: 16px; }
.tick input { width: 12px; height: 12px; border-radius: 2px; background: #3b70f7; }
.tick input::before { content: ""; display: block; width: 7px; height: 4px; margin: 3px 0 0 2px; border: solid #fff; border-width: 0 0 2px 2px; rotate: -45deg; }
.props .styles { height: 174px; padding-right: 8px; }
.props h3 { display: flex; align-items: center; }
.props h3 button { margin-left: auto; }
.props h3 svg { width: 14px; height: 14px; stroke: #bbb; stroke-width: 1.100; }
.styles h3 { padding-right: 6px; }
.styles h3 .add { margin-left: 15px; }
.vars h3 { padding-right: 0; margin-right: -3px; }
.tip { margin-top: 16px; padding: 16px; border-radius: 6px; background: #2a2a2a; color: #a6a6a6; line-height: 18px; text-align: center; white-space: nowrap; }
.tip button, .out button { width: 100%; height: 28px; border: 1px solid #4a4a4a; border-radius: 4px; background: #202020; color: #eee; }
.tip button { margin-top: 12px; }
.props .vars { padding-top: 12px; border: 0; }
.out { margin-top: auto; padding: 6px 10px 6px; height: 39px; border-top: 1px solid #353535; }
.bubble { position: absolute; right: 3px; top: 741px; width: 33px; height: 33px; border-radius: 17px; background: #8d4a68; }
```
